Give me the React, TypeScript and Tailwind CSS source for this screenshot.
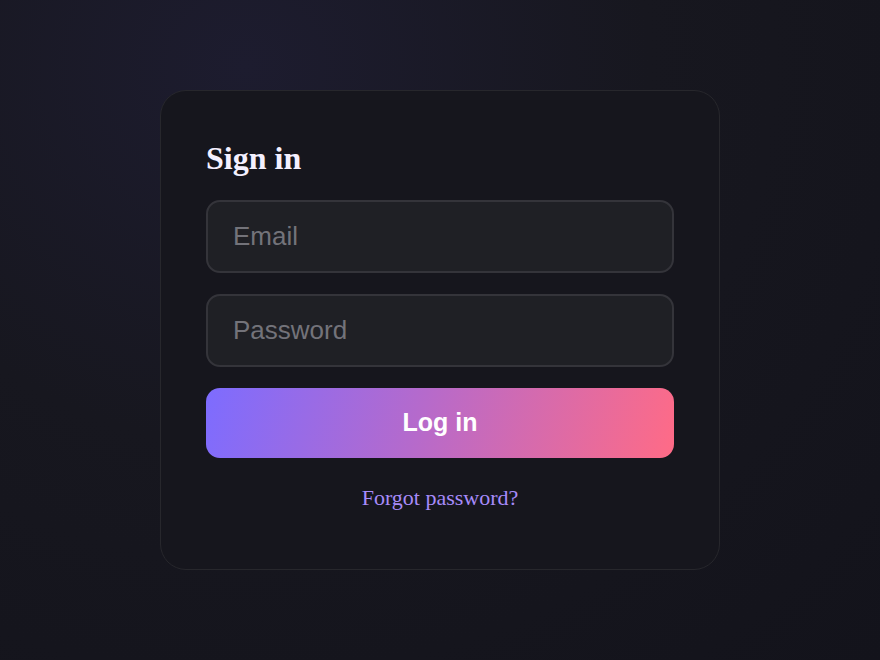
export default function App() {
  return (
    <div className="min-h-screen w-full flex items-start justify-center pt-[90px] bg-[radial-gradient(ellipse_at_28%_10%,#1d1c2f_0%,#17171f_45%,#13131b_100%)]">
      <div className="w-[560px] h-[480px] rounded-[26px] border border-[#27272c] bg-[#16161d] px-[45px] pt-[45px] flex flex-col">
        <h1 className="text-[32px] font-bold leading-[44px] text-[#f4f0ff] font-['Liberation_Serif',serif]">
          Sign in
        </h1>
        <div className="mt-[20px] flex flex-col gap-[21px]">
          <input
            type="email"
            placeholder="Email"
            className="h-[73px] w-full rounded-[14px] border-2 border-[#34343a] bg-[#1f2025] px-[25px] text-[26px] text-white placeholder:text-[#73737a] outline-none font-['Liberation_Sans',sans-serif]"
          />
          <input
            type="password"
            placeholder="Password"
            className="h-[73px] w-full rounded-[14px] border-2 border-[#34343a] bg-[#1f2025] px-[25px] text-[26px] text-white placeholder:text-[#73737a] outline-none font-['Liberation_Sans',sans-serif]"
          />
          <button className="h-[70px] w-full rounded-[14px] bg-[linear-gradient(105deg,#7d6cff_0%,#b56acc_45%,#ff6b86_100%)] text-[25px] font-bold text-white font-['Liberation_Sans',sans-serif]">
            Log in
          </button>
        </div>
        <a
          href="#"
          className="mt-[23px] self-center text-[22px] text-[#a78bfa] font-['Liberation_Serif',serif]"
        >
          Forgot password?
        </a>
      </div>
    </div>
  );
}
